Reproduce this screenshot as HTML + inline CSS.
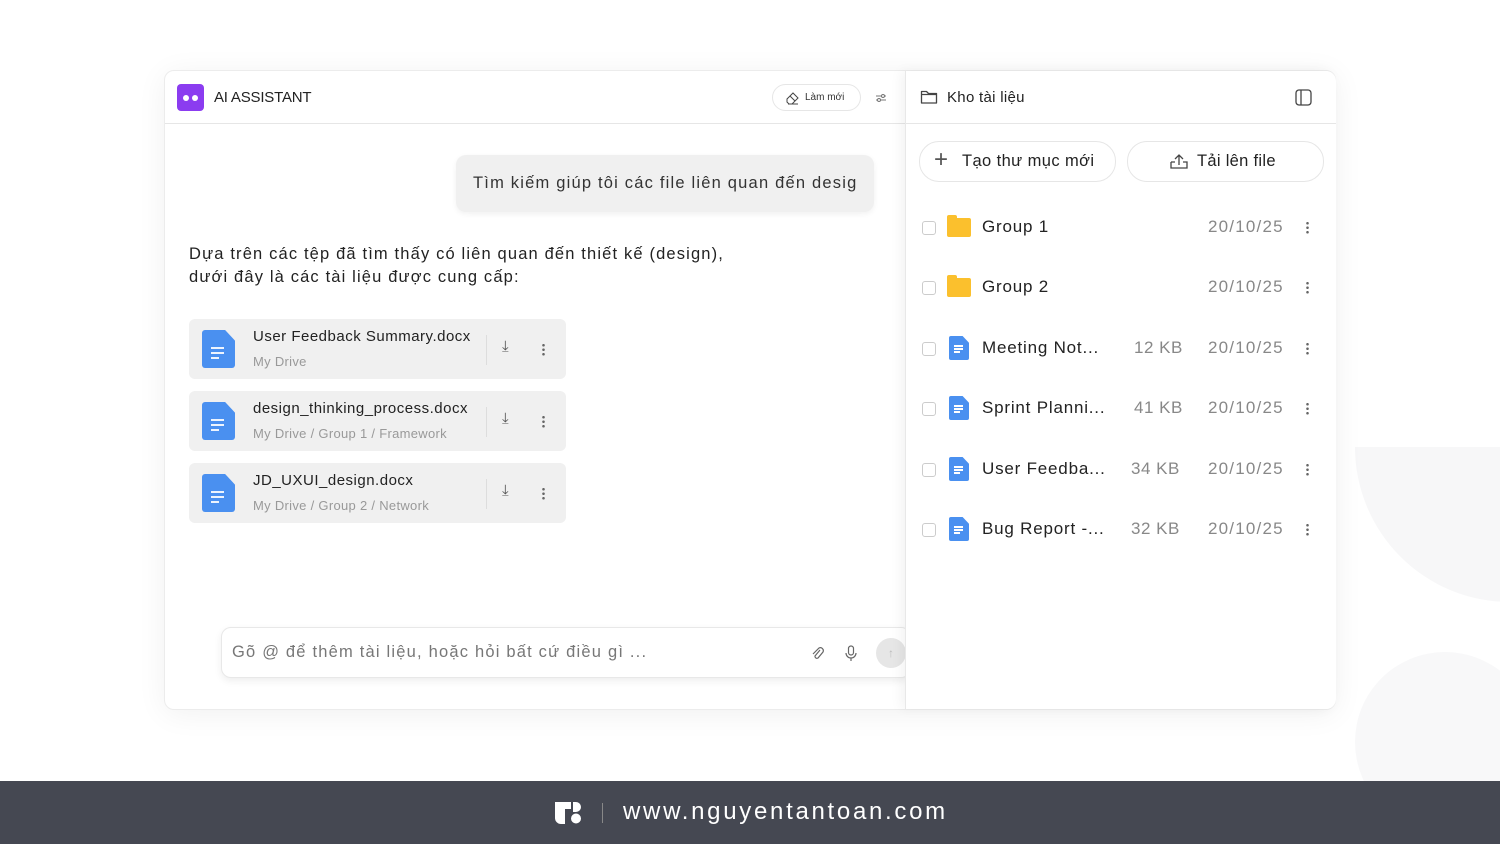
<!DOCTYPE html>
<html><head><meta charset="utf-8"><style>
*{box-sizing:border-box;margin:0;padding:0}
body{width:1500px;height:844px;overflow:hidden;background:#fff;font-family:"Liberation Sans","DejaVu Sans",sans-serif;color:#222;position:relative}
.bg1{position:absolute;left:1355px;top:292px;width:310px;height:310px;border-radius:50%;background:#f7f7f8;clip-path:inset(155px 0 0 0)}
.bg2{position:absolute;left:1355px;top:652px;width:180px;height:180px;border-radius:50%;background:#f8f8f9}
.card{position:absolute;left:164px;top:70px;width:1172px;height:640px;background:#fff;border:1px solid #ececec;border-radius:10px;box-shadow:0 4px 30px rgba(0,0,0,.06)}
.left{position:absolute;left:0;top:0;width:740px;height:638px}
.right{position:absolute;left:740px;top:0;width:431px;height:638px;border-left:1px solid #e8e8e8;box-shadow:-4px 0 12px rgba(0,0,0,.05);border-radius:0 10px 10px 0;background:#fff}
.hdr{height:53px;border-bottom:1px solid #e6e6e6;position:relative}
.abs{position:absolute}
.file{position:absolute;left:24px;width:377px;height:60px;background:#f0f0f0;border-radius:6px}
.file .nm{position:absolute;left:64px;top:9px;font-size:15px;color:#222;letter-spacing:.5px}
.file .pt{position:absolute;left:64px;top:35px;font-size:13px;color:#999;letter-spacing:.3px}
.file .sep{position:absolute;left:297px;top:16px;width:1px;height:30px;background:#ddd}
.doc{position:absolute;width:33px;height:38px;background:#4a90f0;border-radius:3px;clip-path:polygon(0 0,70% 0,100% 28%,100% 100%,0 100%)}
.doc i{position:absolute;left:9px;height:2px;background:#fff;opacity:.9}
.row{position:absolute;left:0;width:431px;height:30px;font-size:17px;color:#222}
.cb{position:absolute;left:16px;top:8px;width:14px;height:14px;border:1.5px solid #ccc;border-radius:3px}
.fold{position:absolute;left:41px;top:5px;width:24px;height:19px;background:#fbc02d;border-radius:2px}
.fold:before{content:"";position:absolute;left:0;top:-3px;width:10px;height:5px;background:#fbc02d;border-radius:2px 2px 0 0}
.sd{position:absolute;left:43px;top:2px;width:20px;height:24px;background:#4a90f0;border-radius:2px;clip-path:polygon(0 0,68% 0,100% 28%,100% 100%,0 100%)}
.sd i{position:absolute;left:5px;height:1.5px;background:#fff}
.rn{position:absolute;left:76px;top:4px;letter-spacing:.8px}
.sz{position:absolute;left:228px;top:4px;color:#888;letter-spacing:.5px}
.dt{position:absolute;left:302px;top:4px;color:#888;letter-spacing:1.2px}
.dots{position:absolute;left:400px;top:8px;width:3px;height:14px;background:radial-gradient(circle,#666 1.2px,transparent 1.4px) 0 0/3px 4.5px repeat-y}
.footer{position:absolute;left:0;top:781px;width:1500px;height:63px;background:#454852}
</style></head><body>
<div class="bg1"></div><div class="bg2"></div>
<div class="card">
 <div class="left">
  <div class="hdr">
   <div class="abs" style="left:12px;top:13px;width:27px;height:27px;background:#8b3cf0;border-radius:4px"><span class="abs" style="left:6px;top:11px;width:6px;height:6px;background:#fff;border-radius:50%"></span><span class="abs" style="left:15px;top:11px;width:6px;height:6px;background:#fff;border-radius:50%"></span></div>
   <div class="abs" style="left:49px;top:18px;font-size:15px;color:#222;letter-spacing:-.2px">AI ASSISTANT</div>
   <div class="abs" style="left:607px;top:13px;width:89px;height:27px;border:1px solid #e6e6e6;border-radius:14px;font-size:10px;color:#333;padding:7px 0 0 32px">Làm mới
    <svg class="abs" style="left:12px;top:6px" width="15" height="14" viewBox="0 0 15 14"><path d="M2 8l6-6 5 5-6 6H4L2 11z M5 5l5 5 M3 13h10" fill="none" stroke="#444" stroke-width="1"/></svg></div>
   <svg class="abs" style="left:709px;top:20px" width="14" height="14" viewBox="0 0 14 14"><path d="M2 5h10M2 9h10" stroke="#777" stroke-width="1"/><circle cx="9" cy="5" r="1.5" fill="#fff" stroke="#777"/><circle cx="5" cy="9" r="1.5" fill="#fff" stroke="#777"/></svg>
  </div>
  <div class="abs" style="left:291px;top:84px;width:418px;height:57px;background:#f0f0f0;border-radius:10px;box-shadow:0 2px 6px rgba(0,0,0,.06);font-size:16.5px;color:#333;padding:19px 0 0 17px;letter-spacing:1.2px;white-space:nowrap">Tìm kiếm giúp tôi các file liên quan đến desig</div>
  <div class="abs" style="left:24px;top:172px;font-size:16.5px;line-height:23px;color:#222;letter-spacing:1.15px;white-space:nowrap">Dựa trên các tệp đã tìm thấy có liên quan đến thiết kế (design),<br>dưới đây là các tài liệu được cung cấp:</div>
  <div class="file" style="top:248px"><div class="doc" style="left:13px;top:11px"><i style="top:17px;width:13px"></i><i style="top:22px;width:13px"></i><i style="top:27px;width:8px"></i></div><div class="nm">User Feedback Summary.docx</div><div class="pt">My Drive</div><div class="sep"></div><div class="abs" style="left:313px;top:19px;font-size:15px;color:#555">⤓</div><div class="dots" style="left:353px;top:24px"></div></div>
  <div class="file" style="top:320px"><div class="doc" style="left:13px;top:11px"><i style="top:17px;width:13px"></i><i style="top:22px;width:13px"></i><i style="top:27px;width:8px"></i></div><div class="nm">design_thinking_process.docx</div><div class="pt">My Drive / Group 1 / Framework</div><div class="sep"></div><div class="abs" style="left:313px;top:19px;font-size:15px;color:#555">⤓</div><div class="dots" style="left:353px;top:24px"></div></div>
  <div class="file" style="top:392px"><div class="doc" style="left:13px;top:11px"><i style="top:17px;width:13px"></i><i style="top:22px;width:13px"></i><i style="top:27px;width:8px"></i></div><div class="nm">JD_UXUI_design.docx</div><div class="pt">My Drive / Group 2 / Network</div><div class="sep"></div><div class="abs" style="left:313px;top:19px;font-size:15px;color:#555">⤓</div><div class="dots" style="left:353px;top:24px"></div></div>
  <div class="abs" style="left:56px;top:556px;width:690px;height:51px;background:#fff;border:1px solid #e8e8e8;border-radius:10px;box-shadow:0 3px 8px rgba(0,0,0,.07)">
   <div class="abs" style="left:10px;top:15px;font-size:16.5px;color:#777;letter-spacing:1.2px;white-space:nowrap">Gõ @ để thêm tài liệu, hoặc hỏi bất cứ điều gì ...</div>
   <svg class="abs" style="left:588px;top:17px" width="14" height="16" viewBox="0 0 14 16"><path d="M10 5L5 11a2 2 0 0 0 3 2l5-6a3 3 0 0 0-4-4L3 9" fill="none" stroke="#666" stroke-width="1.2"/></svg>
   <svg class="abs" style="left:622px;top:16px" width="14" height="18" viewBox="0 0 14 18"><rect x="4.5" y="2" width="5" height="9" rx="2.5" fill="none" stroke="#666" stroke-width="1.2"/><path d="M2 9a5 5 0 0 0 10 0M7 14v3" fill="none" stroke="#666" stroke-width="1.2"/></svg>
   <div class="abs" style="left:654px;top:10px;width:30px;height:30px;border-radius:50%;background:#e6e6e6;color:#bbb;font-size:12px;text-align:center;line-height:30px">↑</div>
  </div>
 </div>
 <div class="right">
  <div class="hdr">
   <svg class="abs" style="left:14px;top:18px" width="18" height="16" viewBox="0 0 18 16"><path d="M1.5 2.5h5l2 2h8v9.5h-15z M1.5 5.5h15" fill="none" stroke="#444" stroke-width="1.3" stroke-linejoin="round"/></svg>
   <div class="abs" style="left:41px;top:18px;font-size:15px;color:#222;letter-spacing:.3px">Kho tài liệu</div>
   <svg class="abs" style="left:389px;top:18px" width="17" height="17" viewBox="0 0 17 17"><rect x="1" y="1" width="15" height="15" rx="3" fill="none" stroke="#444" stroke-width="1.3"/><path d="M6 1v15" stroke="#444" stroke-width="1.3"/></svg>
  </div>
  <div class="abs" style="left:13px;top:70px;width:197px;height:41px;border:1px solid #e6e6e6;border-radius:20px;font-size:16.5px;color:#222;padding:10px 0 0 42px;letter-spacing:.4px">Tạo thư mục mới<span class="abs" style="left:14px;top:5px;font-size:24px;font-weight:300;color:#555;line-height:26px">+</span></div>
  <div class="abs" style="left:221px;top:70px;width:197px;height:41px;border:1px solid #e6e6e6;border-radius:20px;font-size:16.5px;color:#222;padding:10px 0 0 69px;letter-spacing:.3px">Tải lên file
   <svg class="abs" style="left:42px;top:11px" width="18" height="17" viewBox="0 0 18 17"><path d="M1 9v6h16V9h-4M9 12V2M5 6l4-4 4 4M5 9H1" fill="none" stroke="#444" stroke-width="1.3"/></svg></div>
  <div class="row" style="top:142px"><div class="cb"></div><div class="fold"></div><div class="rn">Group 1</div><div class="dt">20/10/25</div><div class="dots"></div></div>
  <div class="row" style="top:202px"><div class="cb"></div><div class="fold"></div><div class="rn">Group 2</div><div class="dt">20/10/25</div><div class="dots"></div></div>
  <div class="row" style="top:263px"><div class="cb"></div><div class="sd"><i style="top:9px;width:9px"></i><i style="top:12px;width:9px"></i><i style="top:15px;width:6px"></i></div><div class="rn">Meeting Not...</div><div class="sz">12 KB</div><div class="dt">20/10/25</div><div class="dots"></div></div>
  <div class="row" style="top:323px"><div class="cb"></div><div class="sd"><i style="top:9px;width:9px"></i><i style="top:12px;width:9px"></i><i style="top:15px;width:6px"></i></div><div class="rn">Sprint Planni...</div><div class="sz">41 KB</div><div class="dt">20/10/25</div><div class="dots"></div></div>
  <div class="row" style="top:384px"><div class="cb"></div><div class="sd"><i style="top:9px;width:9px"></i><i style="top:12px;width:9px"></i><i style="top:15px;width:6px"></i></div><div class="rn">User Feedba...</div><div class="sz" style="left:225px">34 KB</div><div class="dt">20/10/25</div><div class="dots"></div></div>
  <div class="row" style="top:444px"><div class="cb"></div><div class="sd"><i style="top:9px;width:9px"></i><i style="top:12px;width:9px"></i><i style="top:15px;width:6px"></i></div><div class="rn">Bug Report -...</div><div class="sz" style="left:225px">32 KB</div><div class="dt">20/10/25</div><div class="dots"></div></div>
 </div>
</div>
<div class="footer">
 <svg class="abs" style="left:555px;top:21px" width="27" height="22" viewBox="0 0 27 22"><path d="M0 0h16v7h-6v15H6A6 6 0 0 1 0 16V6z" fill="#fff"/><path d="M18 0h3a5 5 0 0 1 0 10h-3z" fill="#fff"/><circle cx="21" cy="16.5" r="5" fill="#fff"/></svg>
 <div class="abs" style="left:602px;top:22px;width:1px;height:20px;background:#888"></div>
 <div class="abs" style="left:623px;top:17px;font-size:24px;color:#fff;letter-spacing:2.7px;white-space:nowrap">www.nguyentantoan.com</div>
</div>
</body></html>
